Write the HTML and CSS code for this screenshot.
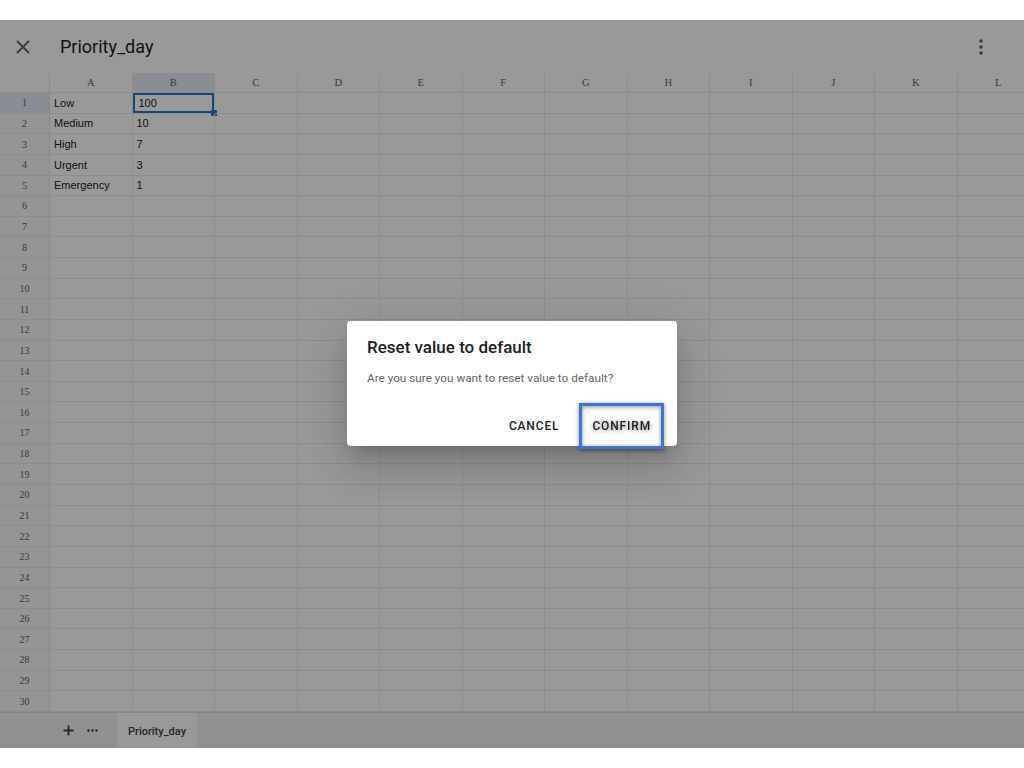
FILE: index.html
```html
<!DOCTYPE html>
<html>
<head>
<meta charset="utf-8">
<link rel="stylesheet" href="styles.css">
</head>
<body>
<div class="topgap"></div>
<div class="app">
  <header class="bar">
    <svg class="close" width="14" height="14" viewBox="0 0 14 14"><path d="M1 1L13 13M13 1L1 13" stroke="#5f6368" stroke-width="1.8" fill="none"/></svg>
    <div class="title">Priority_day</div>
    <svg class="kebab" width="4" height="16" viewBox="0 0 4 16"><circle cx="2" cy="2" r="1.8" fill="#5f6368"/><circle cx="2" cy="8" r="1.8" fill="#5f6368"/><circle cx="2" cy="14" r="1.8" fill="#5f6368"/></svg>
  </header>
  <div class="sheet">
    <div class="row head"><b class="rh corner"></b><b>A</b><b class="sel">B</b><b>C</b><b>D</b><b>E</b><b>F</b><b>G</b><b>H</b><b>I</b><b>J</b><b>K</b><b>L</b></div>
    <div class="row"><b class="rh sel">1</b><i>Low</i><i class="active">100<span class="handle"></span></i><i></i><i></i><i></i><i></i><i></i><i></i><i></i><i></i><i></i><i></i></div>
    <div class="row"><b class="rh">2</b><i>Medium</i><i>10</i><i></i><i></i><i></i><i></i><i></i><i></i><i></i><i></i><i></i><i></i></div>
    <div class="row"><b class="rh">3</b><i>High</i><i>7</i><i></i><i></i><i></i><i></i><i></i><i></i><i></i><i></i><i></i><i></i></div>
    <div class="row"><b class="rh">4</b><i>Urgent</i><i>3</i><i></i><i></i><i></i><i></i><i></i><i></i><i></i><i></i><i></i><i></i></div>
    <div class="row"><b class="rh">5</b><i>Emergency</i><i>1</i><i></i><i></i><i></i><i></i><i></i><i></i><i></i><i></i><i></i><i></i></div>
    <div class="row"><b class="rh">6</b><i></i><i></i><i></i><i></i><i></i><i></i><i></i><i></i><i></i><i></i><i></i><i></i></div>
    <div class="row"><b class="rh">7</b><i></i><i></i><i></i><i></i><i></i><i></i><i></i><i></i><i></i><i></i><i></i><i></i></div>
    <div class="row"><b class="rh">8</b><i></i><i></i><i></i><i></i><i></i><i></i><i></i><i></i><i></i><i></i><i></i><i></i></div>
    <div class="row"><b class="rh">9</b><i></i><i></i><i></i><i></i><i></i><i></i><i></i><i></i><i></i><i></i><i></i><i></i></div>
    <div class="row"><b class="rh">10</b><i></i><i></i><i></i><i></i><i></i><i></i><i></i><i></i><i></i><i></i><i></i><i></i></div>
    <div class="row"><b class="rh">11</b><i></i><i></i><i></i><i></i><i></i><i></i><i></i><i></i><i></i><i></i><i></i><i></i></div>
    <div class="row"><b class="rh">12</b><i></i><i></i><i></i><i></i><i></i><i></i><i></i><i></i><i></i><i></i><i></i><i></i></div>
    <div class="row"><b class="rh">13</b><i></i><i></i><i></i><i></i><i></i><i></i><i></i><i></i><i></i><i></i><i></i><i></i></div>
    <div class="row"><b class="rh">14</b><i></i><i></i><i></i><i></i><i></i><i></i><i></i><i></i><i></i><i></i><i></i><i></i></div>
    <div class="row"><b class="rh">15</b><i></i><i></i><i></i><i></i><i></i><i></i><i></i><i></i><i></i><i></i><i></i><i></i></div>
    <div class="row"><b class="rh">16</b><i></i><i></i><i></i><i></i><i></i><i></i><i></i><i></i><i></i><i></i><i></i><i></i></div>
    <div class="row"><b class="rh">17</b><i></i><i></i><i></i><i></i><i></i><i></i><i></i><i></i><i></i><i></i><i></i><i></i></div>
    <div class="row"><b class="rh">18</b><i></i><i></i><i></i><i></i><i></i><i></i><i></i><i></i><i></i><i></i><i></i><i></i></div>
    <div class="row"><b class="rh">19</b><i></i><i></i><i></i><i></i><i></i><i></i><i></i><i></i><i></i><i></i><i></i><i></i></div>
    <div class="row"><b class="rh">20</b><i></i><i></i><i></i><i></i><i></i><i></i><i></i><i></i><i></i><i></i><i></i><i></i></div>
    <div class="row"><b class="rh">21</b><i></i><i></i><i></i><i></i><i></i><i></i><i></i><i></i><i></i><i></i><i></i><i></i></div>
    <div class="row"><b class="rh">22</b><i></i><i></i><i></i><i></i><i></i><i></i><i></i><i></i><i></i><i></i><i></i><i></i></div>
    <div class="row"><b class="rh">23</b><i></i><i></i><i></i><i></i><i></i><i></i><i></i><i></i><i></i><i></i><i></i><i></i></div>
    <div class="row"><b class="rh">24</b><i></i><i></i><i></i><i></i><i></i><i></i><i></i><i></i><i></i><i></i><i></i><i></i></div>
    <div class="row"><b class="rh">25</b><i></i><i></i><i></i><i></i><i></i><i></i><i></i><i></i><i></i><i></i><i></i><i></i></div>
    <div class="row"><b class="rh">26</b><i></i><i></i><i></i><i></i><i></i><i></i><i></i><i></i><i></i><i></i><i></i><i></i></div>
    <div class="row"><b class="rh">27</b><i></i><i></i><i></i><i></i><i></i><i></i><i></i><i></i><i></i><i></i><i></i><i></i></div>
    <div class="row"><b class="rh">28</b><i></i><i></i><i></i><i></i><i></i><i></i><i></i><i></i><i></i><i></i><i></i><i></i></div>
    <div class="row"><b class="rh">29</b><i></i><i></i><i></i><i></i><i></i><i></i><i></i><i></i><i></i><i></i><i></i><i></i></div>
    <div class="row"><b class="rh">30</b><i></i><i></i><i></i><i></i><i></i><i></i><i></i><i></i><i></i><i></i><i></i><i></i></div>
  </div>
  <footer class="tabs">
    <svg class="add" width="11" height="11" viewBox="0 0 11 11"><path d="M5.5 0.5V10.5M0.5 5.5H10.5" stroke="#3c4043" stroke-width="1.8" fill="none"/></svg>
    <svg class="more" width="11" height="3" viewBox="0 0 11 3"><circle cx="1.5" cy="1.5" r="1.2" fill="#3c4043"/><circle cx="5.5" cy="1.5" r="1.2" fill="#3c4043"/><circle cx="9.5" cy="1.5" r="1.2" fill="#3c4043"/></svg>
    <span class="tab">Priority_day</span>
  </footer>
  <div class="scrim">
    <div class="dialog">
      <div class="dtitle">Reset value to default</div>
      <div class="dbody">Are you sure you want to reset value to default?</div>
      <div class="actions">
        <span class="btn">CANCEL</span>
        <span class="btn focus">CONFIRM</span>
      </div>
    </div>
  </div>
</div>
<div class="bottomgap"></div>
</body>
</html>
```
FILE: styles.css
```css
html, body { margin: 0; padding: 0; background: #fff; }
body { width: 1024px; height: 768px; overflow: hidden; font-family: Roboto, "Liberation Sans", sans-serif; }
.topgap { height: 20px; }
.bottomgap { height: 20px; }
.app { position: relative; height: 728px; display: flex; flex-direction: column; overflow: hidden; background: #fff; }

.bar { height: 53px; flex: none; display: flex; align-items: center; padding: 0 0 0 16px; }
.title { margin-left: 30px; font-size: 18px; color: #202124; flex: 1; }
.kebab { margin-right: 41px; }

.sheet { flex: 1; display: grid; grid-template-rows: 20px repeat(30, 1fr); }
.row { display: grid; grid-template-columns: 50px repeat(12, 82.5px); }
.row > b, .row > i { font-style: normal; font-weight: normal; border-right: 1px solid #ececec; border-bottom: 1px solid #ececec; box-sizing: border-box; overflow: visible; white-space: nowrap; display: flex; align-items: center; position: relative; }
.row > b { justify-content: center; font-family: "Liberation Serif", serif; font-size: 10px; color: #5f6368; background: #f8f9fa; }
.row.head > b { background: #fff; font-size: 10.5px; }
.row.head > b.sel { background: #e6ecf6; }
.row > b.rh { border-right: 1px solid #e4e4e4; }
.row > b.rh.sel { background: #e6ecf6; }
.row.head > b.corner { background: #fff; }
.row > i { padding-left: 4px; font-family: "Liberation Sans", Arial, sans-serif; font-size: 11px; color: #202124; }
.row > i.active { box-shadow: inset 0 0 0 2px #2f6fd6; padding-left: 6px; }
.handle { position: absolute; right: -3px; bottom: -3px; width: 6px; height: 6px; background: #2f6fd6; }

.tabs { height: 36px; flex: none; background: #f1f3f4; border-top: 1px solid #e0e0e0; box-sizing: border-box; display: flex; align-items: center; }
.add { margin-left: 63px; }
.more { margin-left: 13px; }
.tab { margin-left: 19px; width: 80px; align-self: stretch; background: #fff; display: flex; align-items: center; justify-content: center; font-size: 11px; font-weight: 500; color: #3c4043; padding-top: 1px; }

.scrim { position: absolute; inset: 0; background: rgba(0,0,0,0.4); }
.dialog { position: absolute; left: 347px; top: 301px; width: 330px; height: 125px; box-sizing: border-box; background: #fff; border-radius: 4px; padding: 14px 20px 3px 20px; box-shadow: 0 11px 15px -7px rgba(0,0,0,.2), 0 24px 38px 3px rgba(0,0,0,.1), 0 9px 46px 8px rgba(0,0,0,.08); display: flex; flex-direction: column; }
.dtitle { font-size: 17px; font-weight: 500; line-height: 24px; color: #202124; }
.dbody { margin-top: 9px; font-size: 11.75px; line-height: 20px; color: #5f6368; }
.actions { margin-top: 20px; margin-right: -2px; display: flex; justify-content: flex-end; align-items: center; gap: 17px; }
.btn { height: 36px; padding: 0 8px; display: inline-flex; align-items: center; font-size: 12px; font-weight: 500; letter-spacing: 0.85px; color: #202124; }
.btn.focus { outline: 3.5px solid #3d74d6; outline-offset: 2px; filter: drop-shadow(0 1px 2px rgba(0,0,0,.5)); }
```
